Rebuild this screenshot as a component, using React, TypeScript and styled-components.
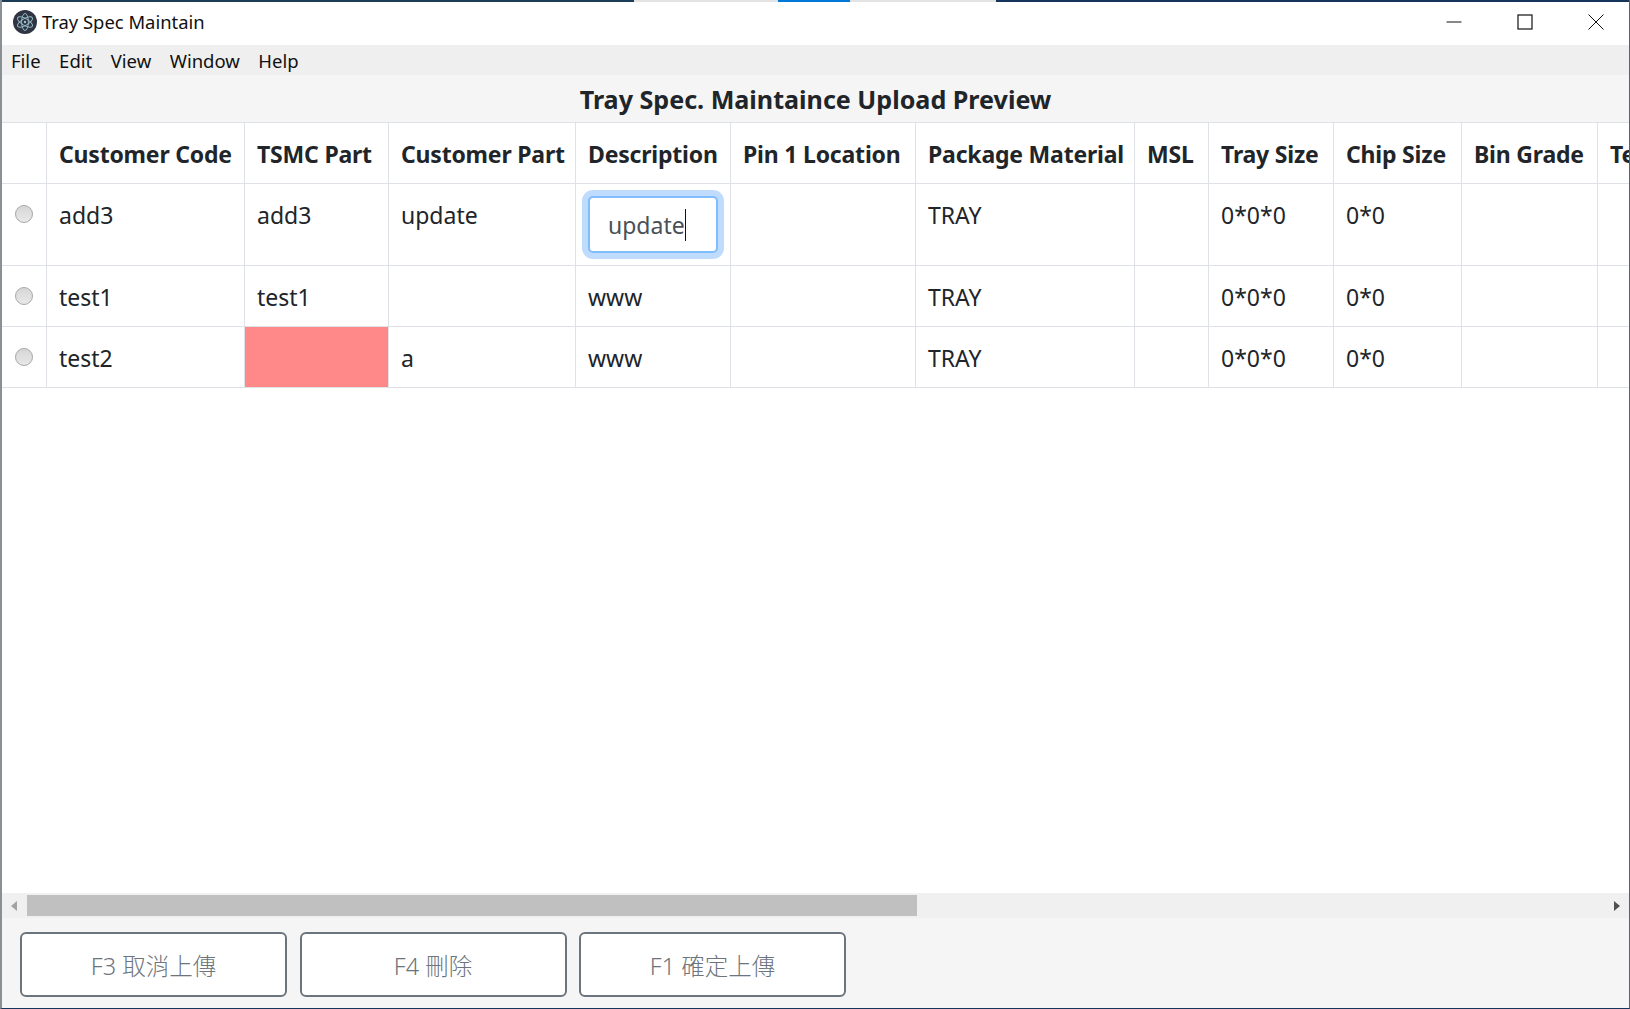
import React from 'react';
import styled, { createGlobalStyle } from 'styled-components';

const columns = [
  { title: '', width: 44 },
  { title: 'Customer Code', width: 198 },
  { title: 'TSMC Part', width: 144 },
  { title: 'Customer Part', width: 187 },
  { title: 'Description', width: 155 },
  { title: 'Pin 1 Location', width: 185 },
  { title: 'Package Material', width: 219 },
  { title: 'MSL', width: 74 },
  { title: 'Tray Size', width: 125 },
  { title: 'Chip Size', width: 128 },
  { title: 'Bin Grade', width: 136 },
  { title: 'Temp', width: 120 },
];

const rows = [
  { code: 'add3', part: 'add3', customerPart: 'update', description: 'update', editing: true },
  { code: 'test1', part: 'test1', customerPart: '', description: 'www' },
  { code: 'test2', part: '', customerPart: 'a', description: 'www', invalid: true },
];

const GlobalStyle = createGlobalStyle`
  html, body {
    margin: 0;
    height: 100%;
    background: #fff;
  }
  * {
    box-sizing: border-box;
  }
`;

export default function App() {
  return (
    <>
      <GlobalStyle />
      <Window>
        <TopStrip>
          <StripPart $color="#1c3d57" $grow />
          <StripPart $color="#e3e3e3" $width={144} />
          <StripPart $color="#0078d7" $width={72} />
          <StripPart $color="#e3e3e3" $width={146} />
          <StripPart $color="#15355c" $grow />
        </TopStrip>
        <TitleBar>
          <AppIcon viewBox="0 0 24 24">
            <circle cx="12" cy="12" r="12" fill="#2f3542" />
            <g fill="none" stroke="#9cc4cf" strokeWidth="0.9">
              <ellipse cx="12" cy="12" rx="8.5" ry="3.4" transform="rotate(30 12 12)" />
              <ellipse cx="12" cy="12" rx="8.5" ry="3.4" transform="rotate(90 12 12)" />
              <ellipse cx="12" cy="12" rx="8.5" ry="3.4" transform="rotate(150 12 12)" />
            </g>
            <circle cx="12" cy="12" r="1.2" fill="#9cc4cf" />
          </AppIcon>
          <WindowTitle>Tray Spec Maintain</WindowTitle>
          <WindowControls>
            <WindowControl viewBox="0 0 16 16">
              <path d="M0.5 8H15.5" />
            </WindowControl>
            <WindowControl viewBox="0 0 16 16">
              <rect x="1" y="1" width="14" height="14" strokeWidth="1.2" />
            </WindowControl>
            <WindowControl viewBox="0 0 16 16">
              <path d="M0.5 0.5L15.5 15.5M15.5 0.5L0.5 15.5" />
            </WindowControl>
          </WindowControls>
        </TitleBar>
        <MenuBar>
          {['File', 'Edit', 'View', 'Window', 'Help'].map((item) => (
            <MenuItem key={item}>{item}</MenuItem>
          ))}
        </MenuBar>
        <PageTitle>Tray Spec. Maintaince Upload Preview</PageTitle>
        <TableArea>
          <Table>
            <colgroup>
              {columns.map((column, index) => (
                <col key={index} width={column.width} />
              ))}
            </colgroup>
            <thead>
              <tr>
                {columns.map((column, index) => (
                  <HeaderCell key={index}>{column.title}</HeaderCell>
                ))}
              </tr>
            </thead>
            <tbody>
              {rows.map((row) => (
                <tr key={row.code}>
                  <RadioCell>
                    <Radio />
                  </RadioCell>
                  <Cell>{row.code}</Cell>
                  <Cell $invalid={row.invalid}>{row.part}</Cell>
                  <Cell>{row.customerPart}</Cell>
                  {row.editing ? (
                    <EditCell>
                      <EditBox>
                        {row.description}
                        <Caret />
                      </EditBox>
                    </EditCell>
                  ) : (
                    <Cell>{row.description}</Cell>
                  )}
                  <Cell />
                  <Cell>TRAY</Cell>
                  <Cell />
                  <Cell>0*0*0</Cell>
                  <Cell>0*0</Cell>
                  <Cell />
                  <Cell />
                </tr>
              ))}
            </tbody>
          </Table>
        </TableArea>
        <ScrollBar>
          <ScrollArrow viewBox="0 0 6 10">
            <path d="M6 0V10L0 5Z" fill="#a3a3a3" />
          </ScrollArrow>
          <ScrollTrack>
            <ScrollThumb />
          </ScrollTrack>
          <ScrollArrow viewBox="0 0 6 10">
            <path d="M0 0V10L6 5Z" fill="#505050" />
          </ScrollArrow>
        </ScrollBar>
        <Footer>
          <ActionButton>F3 取消上傳</ActionButton>
          <ActionButton>F4 刪除</ActionButton>
          <ActionButton>F1 確定上傳</ActionButton>
        </Footer>
      </Window>
    </>
  );
}

const uiFont = `"Noto Sans", "Noto Sans CJK TC", sans-serif`;

const Window = styled.div`
  display: flex;
  flex-direction: column;
  width: 1630px;
  height: 1009px;
  overflow: hidden;
  background: #fff;
  border-left: 2px solid #8a8f94;
  border-right: 1px solid #5f6368;
  border-bottom: 1px solid #15355c;
  font-family: ${uiFont};
  color: #212529;
`;

const TopStrip = styled.div`
  display: flex;
  flex: none;
  height: 2px;
  margin: 0 -1px 0 -2px;
`;

const StripPart = styled.div<{ $color: string; $grow?: boolean; $width?: number }>`
  flex: ${({ $grow }) => ($grow ? '1' : 'none')};
  width: ${({ $width }) => ($width ? `${$width}px` : 'auto')};
  height: 2px;
  background: ${({ $color }) => $color};
`;

const TitleBar = styled.div`
  display: flex;
  flex: none;
  align-items: center;
  height: 43px;
  padding: 0 0 4px 11px;
`;

const AppIcon = styled.svg`
  flex: none;
  width: 24px;
  height: 24px;
  margin-right: 5px;
`;

const WindowTitle = styled.span`
  font-size: 18.4px;
  color: #111;
`;

const WindowControls = styled.div`
  display: flex;
  align-items: center;
  gap: 55px;
  margin-left: auto;
  padding-right: 25px;
`;

const WindowControl = styled.svg`
  width: 16px;
  height: 16px;
  fill: none;
  stroke: #111;
  stroke-width: 1;
`;

const MenuBar = styled.div`
  display: flex;
  flex: none;
  align-items: center;
  gap: 18.5px;
  height: 30px;
  padding: 0 0 0 9px;
  background: #efefef;
`;

const MenuItem = styled.span`
  font-size: 18.5px;
  color: #111;
`;

const PageTitle = styled.div`
  flex: none;
  height: 47px;
  line-height: 49px;
  font-size: 25.1px;
  font-weight: 700;
  text-align: center;
  background: #f5f5f5;
`;

const TableArea = styled.div`
  flex: 1;
  min-height: 0;
  overflow: hidden;
`;

const Table = styled.table`
  table-layout: fixed;
  width: 1715px;
  border-collapse: collapse;
  font-size: 23px;
`;

const HeaderCell = styled.th`
  height: 61px;
  padding: 2px 0 0 12.5px;
  font-weight: 700;
  letter-spacing: -0.2px;
  text-align: left;
  white-space: nowrap;
  overflow: hidden;
  border: 1px solid #dee2e6;
  &:first-child {
    border-left: 0;
  }
`;

const Cell = styled.td<{ $invalid?: boolean }>`
  padding: 13px 12px 10px 12.5px;
  height: 60px;
  vertical-align: top;
  line-height: 37px;
  border: 1px solid #dee2e6;
  background: ${({ $invalid }) => ($invalid ? '#ff8888' : 'transparent')};
`;

const RadioCell = styled(Cell)`
  padding: 13px 0 0 13px;
  border-left: 0;
`;

const Radio = styled.span`
  display: block;
  width: 18px;
  height: 18px;
  margin-top: 8px;
  border-radius: 50%;
  border: 1px solid #a9a9a9;
  background: linear-gradient(#d6d6d6, #e8e8e8);
`;

const EditCell = styled.td`
  padding: 12px 12px 12px 12.5px;
  height: 82px;
  vertical-align: top;
  border: 1px solid #dee2e6;
`;

const EditBox = styled.div`
  display: flex;
  align-items: center;
  width: 130px;
  height: 57px;
  padding: 0 18px;
  line-height: 36px;
  background: #fff;
  border: 2px solid #80bdff;
  border-radius: 5px;
  box-shadow: 0 0 0 6px #bfdcff;
  color: #495057;
`;

const Caret = styled.span`
  flex: none;
  width: 1px;
  height: 32px;
  background: #111;
`;

const ScrollBar = styled.div`
  display: flex;
  flex: none;
  align-items: center;
  height: 25px;
  background: #f0f0f0;
`;

const ScrollArrow = styled.svg`
  flex: none;
  width: 6px;
  height: 10px;
  margin: 0 9px 0 9px;
`;

const ScrollTrack = styled.div`
  flex: 1;
  display: flex;
  align-items: center;
  margin: 0 0 0 1px;
`;

const ScrollThumb = styled.div`
  width: 890px;
  height: 21px;
  background: #c0c0c0;
`;

const Footer = styled.div`
  display: flex;
  flex: none;
  height: 90px;
  gap: 12.5px;
  padding: 14px 0 11px 18px;
  background: #f5f5f5;
`;

const ActionButton = styled.button`
  width: 267px;
  height: 65px;
  padding: 0;
  font-family: ${uiFont};
  font-size: 23.5px;
  font-weight: 300;
  color: #6c757d;
  background: #fff;
  border: 2px solid #6c757d;
  border-radius: 6px;
`;
